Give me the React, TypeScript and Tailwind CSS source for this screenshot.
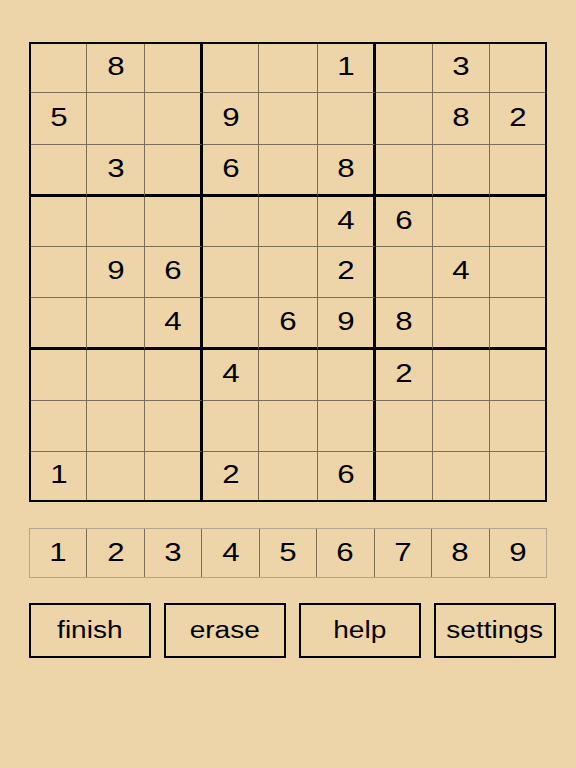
import React from 'react';

const board: string = [
  '.8...1.3.',
  '5..9...82',
  '.3.6.8...',
  '.....46..',
  '.96..2.4.',
  '..4.698..',
  '...4..2..',
  '.........',
  '1..2.6...',
].join('');

const App: React.FC = () => {
  return (
    <div
      className="w-[576px] h-[768px] bg-[#edd5a9] pt-[42px] pl-[29px] text-black"
      style={{ fontFamily: '"Liberation Sans", Arial, sans-serif' }}
    >
      {/* board */}
      <div className="w-[518px] h-[460px] border-2 border-black grid grid-cols-[56px_58px_58px_56px_59px_58px_57px_57px_55px] grid-rows-[49px_52px_52px_50px_51px_52px_51px_51px_48px]">
        {board.split('').map((ch, i) => {
          const r = Math.floor(i / 9);
          const c = i % 9;
          const right =
            c === 8 ? '' : c === 2 || c === 5 ? 'border-r-[3px] border-r-black' : 'border-r border-r-[#7d6d57]';
          const bottom =
            r === 8 ? '' : r === 2 || r === 5 ? 'border-b-[3px] border-b-black' : 'border-b border-b-[#7d6d57]';
          return (
            <div key={i} className={`flex items-center justify-center text-[25px] pb-[2px] ${right} ${bottom}`}>
              {ch !== '.' && <span className="inline-block scale-x-[1.25]">{ch}</span>}
            </div>
          );
        })}
      </div>

      {/* number picker */}
      <div className="mt-[26px] w-[518px] h-[50px] border border-[#b3a58b] flex">
        {[1, 2, 3, 4, 5, 6, 7, 8, 9].map((n) => (
          <div
            key={n}
            className={`flex-1 flex items-center justify-center text-[25px] ${n < 9 ? 'border-r border-r-[#7d6d57]' : ''}`}
          >
            <span className="inline-block scale-x-[1.25]">{n}</span>
          </div>
        ))}
      </div>

      {/* actions */}
      <div className="mt-[25px] flex gap-[13px]">
        {['finish', 'erase', 'help', 'settings'].map((label) => (
          <button
            key={label}
            className="w-[122px] h-[55px] border-2 border-black flex items-center justify-center text-[23px]"
          >
            <span className="inline-block scale-x-[1.22]">{label}</span>
          </button>
        ))}
      </div>
    </div>
  );
};

export default App;
